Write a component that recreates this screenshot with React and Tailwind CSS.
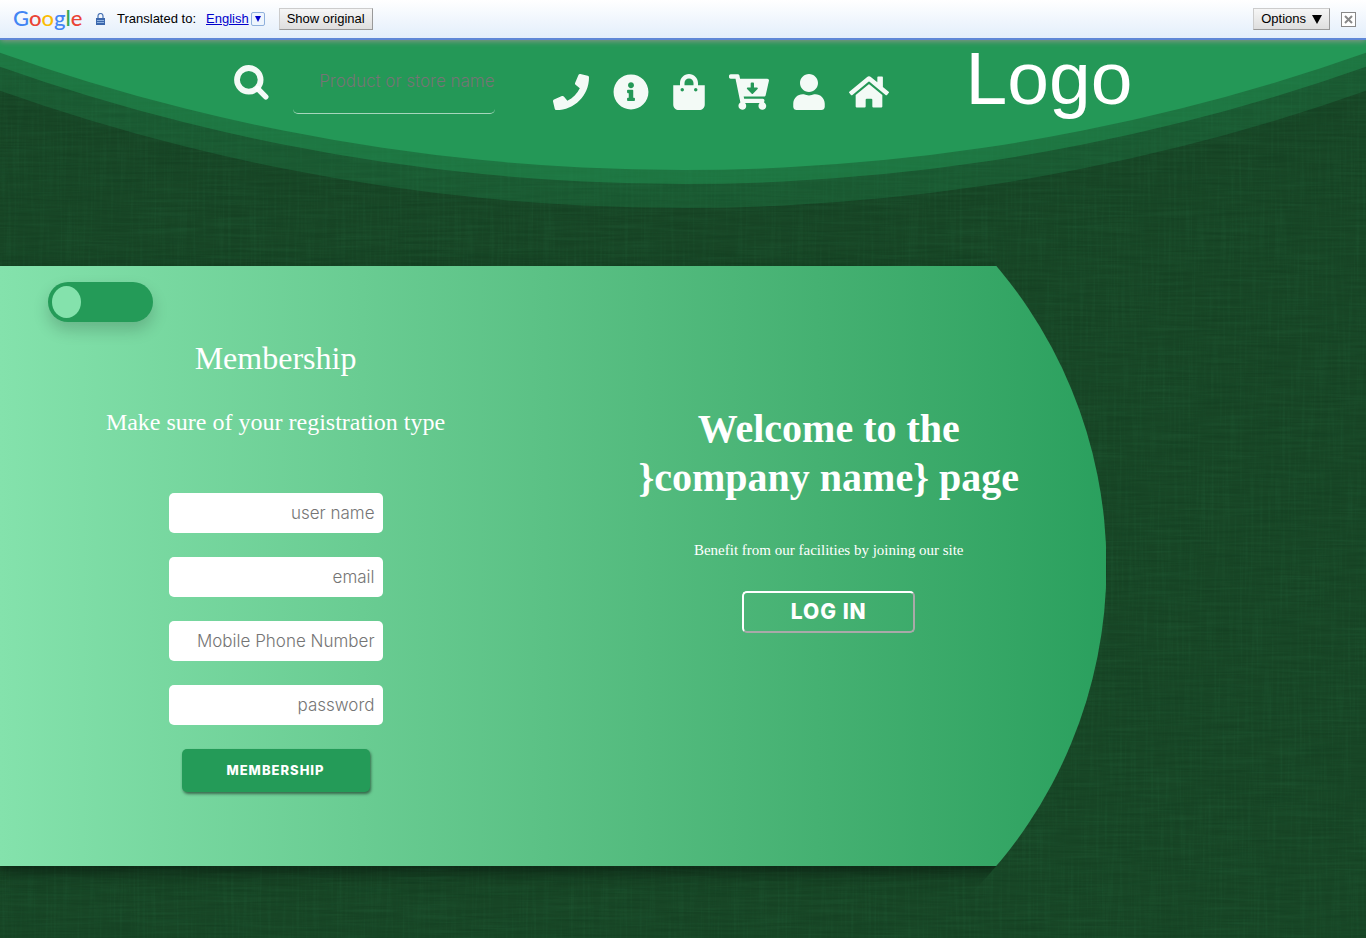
import React from "react";
import {
  FaPhone,
  FaInfoCircle,
  FaShoppingBag,
  FaCartArrowDown,
  FaUser,
  FaHome,
} from "react-icons/fa";

const navItems = [
  { label: "Contact", Icon: FaPhone },
  { label: "About", Icon: FaInfoCircle },
  { label: "Shop", Icon: FaShoppingBag, size: "h-9 w-8" },
  { label: "Cart", Icon: FaCartArrowDown, size: "h-9 w-10" },
  { label: "Account", Icon: FaUser, size: "h-9 w-8" },
  { label: "Home", Icon: FaHome, size: "h-9 w-10" },
];

const fields = [
  { id: "username", type: "text", label: "user name" },
  { id: "email", type: "email", label: "email" },
  { id: "phone", type: "tel", label: "Mobile Phone Number" },
  { id: "password", type: "password", label: "password" },
];

const googleLetters = [
  ["G", "text-[#4285f4]"],
  ["o", "text-[#ea4335]"],
  ["o", "text-[#fbbc05]"],
  ["g", "text-[#4285f4]"],
  ["l", "text-[#34a853]"],
  ["e", "text-[#ea4335]"],
];

function LinenTexture() {
  return (
    <svg className="absolute inset-0 h-full w-full" aria-hidden="true">
      <filter id="weft" x="0" y="0" width="100%" height="100%" colorInterpolationFilters="sRGB">
        <feTurbulence type="fractalNoise" baseFrequency="0.015 0.35" numOctaves="2" seed="4" />
        <feColorMatrix values="0 0 0 0 0.13  0 0 0 0 0.37  0 0 0 0 0.22  1.5 0 0 0 -0.65" />
      </filter>
      <filter id="warp" x="0" y="0" width="100%" height="100%" colorInterpolationFilters="sRGB">
        <feTurbulence type="fractalNoise" baseFrequency="0.35 0.015" numOctaves="2" seed="9" />
        <feColorMatrix values="0 0 0 0 0.13  0 0 0 0 0.37  0 0 0 0 0.22  1.5 0 0 0 -0.65" />
      </filter>
      <filter id="shade" x="0" y="0" width="100%" height="100%" colorInterpolationFilters="sRGB">
        <feTurbulence type="fractalNoise" baseFrequency="0.02 0.4" numOctaves="2" seed="21" />
        <feColorMatrix values="0 0 0 0 0.05  0 0 0 0 0.2  0 0 0 0 0.1  1.5 0 0 0 -0.65" />
      </filter>
      <rect width="100%" height="100%" filter="url(#weft)" opacity="0.45" />
      <rect width="100%" height="100%" filter="url(#warp)" opacity="0.45" />
      <rect width="100%" height="100%" filter="url(#shade)" opacity="0.4" />
    </svg>
  );
}

function SearchIcon() {
  return (
    <svg className="h-[35px] w-[35px]" viewBox="0 0 35 35" fill="none" stroke="currentColor" aria-hidden="true">
      <circle cx="14.8" cy="14.8" r="11.8" strokeWidth="5.8" />
      <path d="M23.5 23.5l8.3 8.3" strokeWidth="5.4" strokeLinecap="round" />
    </svg>
  );
}

function TranslateBar() {
  return (
    <div className="relative z-10 flex h-10 items-center border-b-2 border-[#5f87d6] bg-linear-to-b from-white to-[#e3eefb] pr-[10px] pl-[13px] font-['Liberation_Sans',Arial,sans-serif] text-[13px] text-black shadow-[0_1px_6px_rgba(160,150,150,0.9)]">
      <span className="w-[69px] pb-[2px] font-[Lato,sans-serif] text-[22px] leading-8 font-medium">
        {googleLetters.map(([letter, color], i) => (
          <span key={i} className={color}>{letter}</span>
        ))}
      </span>
      <svg className="ml-[14px] h-3 w-[9px]" viewBox="0 0 9 12" aria-hidden="true">
        <path d="M2 5V3a2.5 2.5 0 0 1 5 0v2" fill="none" stroke="#4a74b5" strokeWidth="1.2" />
        <rect x="0" y="5" width="9" height="7" fill="#3c68ad" />
        <path d="M1 7.5h7M1 9.5h7" stroke="#8fb2e0" strokeWidth="1" />
      </svg>
      <span className="ml-3">Translated to:</span>
      <a href="#language" className="ml-[10px] flex items-center text-[#0000cc]">
        <span className="underline">English</span>
        <span className="ml-[2px] flex h-[14px] w-[14px] items-center justify-center rounded-xs border border-[#8fb0dc] bg-[#eef5fd]">
          <svg className="h-[6px] w-[6px]" viewBox="0 0 6 6" aria-hidden="true">
            <path d="M0 0h6L3 6z" fill="#0000cc" />
          </svg>
        </span>
      </a>
      <button className="ml-[14px] h-[22px] border border-[#ccc] border-r-[#999] border-b-[#999] bg-linear-to-b from-[#f6f6f6] to-[#dedede] px-[7px] leading-4">
        Show original
      </button>
      <button className="ml-auto flex h-[22px] items-center gap-[6px] border border-[#ccc] border-r-[#999] border-b-[#999] bg-linear-to-b from-[#f6f6f6] to-[#dedede] px-[7px] leading-4">
        Options
        <svg className="h-[9px] w-[10px]" viewBox="0 0 10 9" aria-hidden="true">
          <path d="M0 0h10L5 9z" fill="#000" />
        </svg>
      </button>
      <button aria-label="Close" className="ml-[11px] flex h-[15px] w-[15px] items-center justify-center border border-[#888] bg-white">
        <svg className="h-[9px] w-[9px]" viewBox="0 0 9 9" aria-hidden="true">
          <path d="M1 1l7 7M8 1L1 8" stroke="#888" strokeWidth="2" />
        </svg>
      </button>
    </div>
  );
}

function Header() {
  return (
    <header className="relative h-[168px] text-white">
      <div className="absolute inset-x-0 top-0 h-[168px] bg-[#249857]/25 [clip-path:ellipse(150%_2052px_at_50%_calc(100%_-_2052px))]" />
      <div className="absolute inset-x-0 top-0 h-36 bg-[#249857]/45 [clip-path:ellipse(150%_2052px_at_50%_calc(100%_-_2052px))]" />
      <div className="absolute inset-x-0 top-0 h-[130px] bg-[#249857] [clip-path:ellipse(150%_2052px_at_50%_calc(100%_-_2052px))]" />
      <div className="relative flex justify-center text-white/95">
        <form className="flex items-start pt-[25px]">
          <button type="button" aria-label="Search">
            <SearchIcon />
          </button>
          <input
            type="text"
            aria-label="Product or store name"
            placeholder="Product or store name"
            className="ml-6 h-[49px] w-[202px] rounded-[5px] border-b border-white/60 pb-4 text-right font-[Inter,sans-serif] text-[17px] font-light placeholder:text-[#757575]"
          />
        </form>
        <nav className="ml-[58px] flex gap-6 pt-[34px]">
          {navItems.map(({ label, Icon, size = "h-9 w-9" }) => (
            <a key={label} href={"#" + label.toLowerCase()} aria-label={label}>
              <Icon className={size} />
            </a>
          ))}
        </nav>
        <a href="#top" className="ml-[77px] font-['Liberation_Sans',Arial,sans-serif] text-[75px] leading-[76px] text-white">
          Logo
        </a>
      </div>
    </header>
  );
}

export default function App() {
  return (
    <div className="relative min-h-screen overflow-hidden bg-[#184626] font-['Liberation_Serif','Times_New_Roman',serif]">
      <LinenTexture />
      <TranslateBar />
      <Header />
      <main className="relative mt-[58px] mb-[72px] w-[81%] [clip-path:inset(-164px_0_round_0_464px_464px_0)]">
        <div className="grid min-h-[600px] grid-cols-[49.8%_1fr] bg-linear-to-r from-[#84e2ac] to-[#2aa05e] text-white shadow-[0_8px_20px_rgba(0,0,0,0.25),0_6px_8px_rgba(0,0,0,0.22)]">
          <section className="flex flex-col items-center pt-4 pb-[74px]">
            <label className="ml-12 flex h-10 w-[105px] cursor-pointer items-center self-start rounded-full bg-[#249b58] px-1 shadow-[0_8px_16px_rgba(0,0,0,0.18)]">
              <input type="checkbox" aria-label="Registration type" className="h-8 w-[29px] appearance-none rounded-[50%] bg-[#84e2ac] checked:ml-auto" />
            </label>
            <h2 className="mt-3 text-[32px] leading-12">Membership</h2>
            <p className="mt-6 text-2xl leading-8">Make sure of your registration type</p>
            <form className="mt-[55px] flex flex-col items-center gap-6 font-[Inter,sans-serif]">
              {fields.map((f) => (
                <input
                  key={f.id}
                  id={f.id}
                  type={f.type}
                  aria-label={f.label}
                  placeholder={f.label}
                  className="h-10 w-[214px] rounded-[5px] bg-white px-2 text-right text-[17px] font-light text-gray-800 placeholder:text-[#757575]"
                />
              ))}
              <button type="button" className="h-[43px] w-[188px] rounded-[5px] bg-[#249b58] text-[13px] font-extrabold tracking-[1px] shadow-[1px_2px_3px_rgba(0,0,0,0.5)]">
                MEMBERSHIP
              </button>
            </form>
          </section>
          <section className="flex flex-col items-center pt-[138px] text-center">
            <h1 className="text-[40px] leading-[49px] font-bold">
              Welcome to the
              <br />
              {"}company name} page"}
            </h1>
            <p className="mt-[38px] text-[15px] leading-5">Benefit from our facilities by joining our site</p>
            <button type="button" className="mt-[31px] h-[42px] w-[173px] rounded-[5px] border-2 border-white border-r-[#a9a9a9] border-b-[#a9a9a9] font-[Inter,sans-serif] text-[21px] font-extrabold tracking-[1px]">
              LOG IN
            </button>
          </section>
        </div>
      </main>
    </div>
  );
}
